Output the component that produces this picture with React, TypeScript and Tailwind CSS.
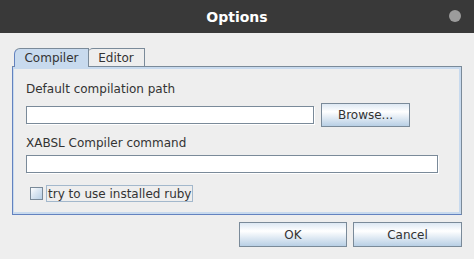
import React from "react";

const btn =
  "flex items-center justify-center border border-[#7a8a99] text-[12px] text-[#333333] bg-[linear-gradient(to_bottom,#dde8f3_0%,#ffffff_35%,#b8cfe5_100%)]";

export default function App() {
  return (
    <div
      className="w-[474px] h-[259px] bg-[#eeeeee] flex flex-col overflow-hidden"
      style={{ fontFamily: '"DejaVu Sans", sans-serif' }}
    >
      <div className="h-[33px] bg-[#393939] flex items-center justify-center relative shrink-0 pt-[1px]">
        <span className="text-white font-bold text-[14px]">Options</span>
        <div className="absolute right-[13px] top-[10px] w-[12px] h-[12px] rounded-full bg-[#9c9c9c]" />
      </div>
      <div className="flex flex-col px-[12px] pt-[15px]">
        <div className="flex h-[18px] ml-[2px] items-end">
          <div className="w-[75px] bg-[#c8daee] border-l border-t border-r border-[#7a8a99] border-l-[#6382bf] rounded-tl-[6px] flex items-center justify-center text-[12px] text-[#333333] relative z-10 -mb-px h-[19px]">
            Compiler
          </div>
          <div className="w-[57px] h-[18px] border-t border-r border-[#7a8a99] rounded-tl-[5px] flex items-center justify-center text-[12px] text-[#333333] -ml-px">
            Editor
          </div>
        </div>
        <div className="h-[149px] border border-[#7a8a99] border-l-[#6382bf] border-b-[#6382bf] shadow-[inset_0_2px_0_#c8daee,inset_1px_0_0_#c8daee,inset_-2px_0_0_#c8daee,inset_0_-2px_0_#c8daee] flex flex-col pl-[13px] pr-[23px] pt-[15px]">
          <div className="h-[14px] leading-[14px] text-[12px] text-[#333333]">Default compilation path</div>
          <div className="flex items-center mt-[7px] h-[24px]">
            <div className="w-[288px] h-[18px] bg-white border border-[#7a8a99] shadow-[1px_1px_0_#ffffff]" />
            <div className={btn + " ml-[7px] w-[89px] h-[24px]"}>Browse...</div>
          </div>
          <div className="h-[14px] leading-[14px] text-[12px] text-[#333333] mt-[9px]">XABSL Compiler command</div>
          <div className="mt-[5px] w-[412px] h-[18px] bg-white border border-[#7a8a99] shadow-[1px_1px_0_#ffffff]" />
          <div className="flex items-center mt-[12px] h-[17px]">
            <div className="ml-[4px] w-[13px] h-[13px] border border-[#7a8a99] bg-[linear-gradient(to_bottom_right,#ffffff_0%,#dde8f3_40%,#b8cfe5_100%)]" />
            <div className="ml-[3px] h-[17px] border border-[#a3b8cc] px-[1px] flex items-center text-[12px] text-[#333333] leading-[14px]">
              try to use installed ruby
            </div>
          </div>
        </div>
        <div className="flex justify-end gap-[6px] mt-[7px]">
          <div className={btn + " w-[108px] h-[25px]"}>OK</div>
          <div className={btn + " w-[109px] h-[25px]"}>Cancel</div>
        </div>
      </div>
    </div>
  );
}
